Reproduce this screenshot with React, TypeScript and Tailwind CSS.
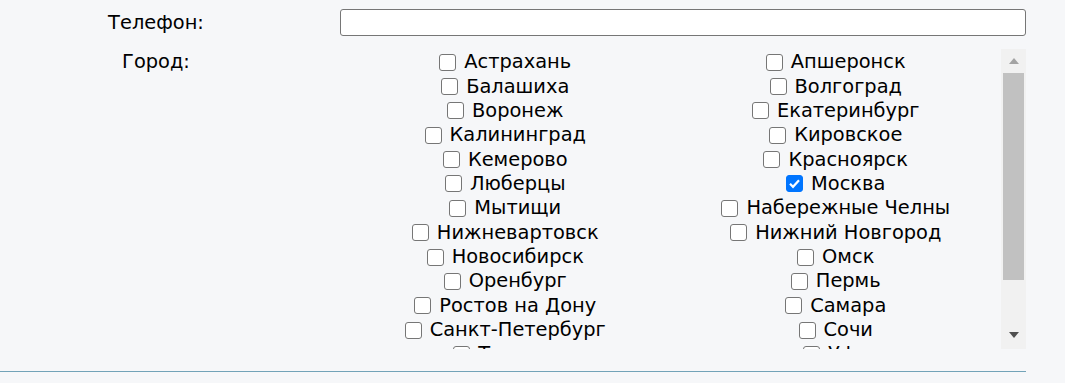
const left = [
  'Астрахань',
  'Балашиха',
  'Воронеж',
  'Калининград',
  'Кемерово',
  'Люберцы',
  'Мытищи',
  'Нижневартовск',
  'Новосибирск',
  'Оренбург',
  'Ростов на Дону',
  'Санкт-Петербург',
  'Тюмень',
]

const right = [
  'Апшеронск',
  'Волгоград',
  'Екатеринбург',
  'Кировское',
  'Красноярск',
  'Москва',
  'Набережные Челны',
  'Нижний Новгород',
  'Омск',
  'Пермь',
  'Самара',
  'Сочи',
  'Уфа',
]

function Checkbox({ checked }: { checked?: boolean }) {
  return (
    <span className="relative w-[17px] h-[17px] shrink-0">
      <input
        type="checkbox"
        defaultChecked={checked}
        className="peer appearance-none block w-[17px] h-[17px] m-0 bg-white border border-[#767676] rounded-[3px] checked:bg-[#0075ff] checked:border-[#0075ff]"
      />
      {checked && (
        <svg className="absolute inset-0 pointer-events-none" width="17" height="17" viewBox="0 0 17 17">
          <path d="M4 8.8 L7 11.8 L13 5.2" fill="none" stroke="white" strokeWidth="2.2" />
        </svg>
      )}
    </span>
  )
}

function CityColumn({ cities, checked }: { cities: string[]; checked?: string }) {
  return (
    <div className="flex flex-col">
      {cities.map((city) => (
        <label key={city} className="h-[24.36px] shrink-0 flex items-center justify-center gap-[8px] whitespace-nowrap">
          <Checkbox checked={city === checked} />
          <span>{city}</span>
        </label>
      ))}
    </div>
  )
}

function Scrollbar() {
  return (
    <div className="w-[25px] h-full bg-[#f1f1f1] flex flex-col items-center shrink-0">
      <div className="h-[24px] w-full flex items-center justify-center">
        <svg width="10" height="6" viewBox="0 0 10 6">
          <path d="M5 0 L10 6 L0 6 Z" fill="#a3a3a3" />
        </svg>
      </div>
      <div className="h-[207px] w-[21px] bg-[#c1c1c1]" />
      <div className="flex-1" />
      <div className="h-[24px] w-full flex items-center justify-center pb-[4px]">
        <svg width="10" height="6" viewBox="0 0 10 6">
          <path d="M0 0 L10 0 L5 6 Z" fill="#505050" />
        </svg>
      </div>
    </div>
  )
}

export default function App() {
  return (
    <div className="min-h-screen bg-[#f6f7f9] text-black text-[19.4px] leading-[24px] font-['DejaVu_Sans',sans-serif] pt-[9px]">
      <div className="w-[1026px] border-b border-[#72a3b8] pb-[22px]">
        <div className="flex items-center">
          <div className="w-[312px] text-center">Телефон:</div>
          <input
            type="text"
            className="ml-[28px] w-[686px] h-[27px] bg-white border border-[#767676] rounded-[3px]"
          />
        </div>

        <div className="flex mt-[13px]">
          <div className="w-[312px] pt-[1px] h-[24.36px] flex items-center justify-center">Город:</div>
          <div className="ml-[28px] w-[686px] h-[300px] flex">
            <div className="flex-1 overflow-hidden grid grid-cols-2 pt-[1px]">
              <CityColumn cities={left} />
              <CityColumn cities={right} checked="Москва" />
            </div>
            <Scrollbar />
          </div>
        </div>
      </div>
    </div>
  )
}
